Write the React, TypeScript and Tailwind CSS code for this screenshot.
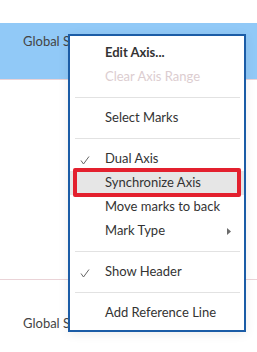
import React from "react";

const Check = () => (
  <svg width="10" height="9" viewBox="0 0 10 9" className="absolute left-[10px] top-[9px]">
    <path d="M1 4.5 L3.5 8 L9 0.5" fill="none" stroke="#666" strokeWidth="1" />
  </svg>
);

function Item({
  label,
  bold,
  disabled,
  checked,
  highlight,
  arrow,
}: {
  label: string;
  bold?: boolean;
  disabled?: boolean;
  checked?: boolean;
  highlight?: boolean;
  arrow?: boolean;
}) {
  return (
    <div
      className={
        "relative h-[24px] flex items-center pl-[35px] text-[13px] " +
        (highlight ? "bg-[#e6e6e6] " : "") +
        (bold ? "font-bold " : "") +
        (disabled ? "text-[#dccdd0]" : "text-[#333333]")
      }
    >
      {checked && <Check />}
      <span>{label}</span>
      {arrow && (
        <svg width="4" height="7" viewBox="0 0 4 7" className="absolute right-[13px] top-[9px]">
          <path d="M0 0 L4 3.5 L0 7 Z" fill="#6b6b6b" />
        </svg>
      )}
    </div>
  );
}

const Sep = () => (
  <div className="h-[17px] flex items-center pl-[5px] pr-[4px]">
    <div className="h-px w-full bg-[#e2e2e2]" />
  </div>
);

export default function App() {
  return (
    <div
      className="relative w-[257px] h-[352px] bg-white overflow-hidden"
      style={{ fontFamily: "Lato, 'Open Sans', sans-serif" }}
    >
      <div className="h-[23px]" />
      <div className="h-[57px] bg-[#91c9f7] border-b border-[#ead3d7] pl-[23px] pt-[9px] text-[13px] text-[#444]">
        Global Sales
      </div>
      <div className="h-[200px] border-b border-[#ead3d7]" />
      <div className="pl-[23px] pt-[34px] text-[13px] text-[#444]">Global Sales</div>

      <div className="absolute left-[68px] top-[34px] w-[178px] h-[298px] bg-white border-2 border-[#1b5ca6] shadow-[0_2px_10px_rgba(0,0,0,0.08)] py-[5px]">
        <Item label="Edit Axis..." bold />
        <Item label="Clear Axis Range" disabled />
        <Sep />
        <Item label="Select Marks" />
        <Sep />
        <Item label="Dual Axis" checked />
        <Item label="Synchronize Axis" highlight />
        <Item label="Move marks to back" />
        <Item label="Mark Type" arrow />
        <Sep />
        <Item label="Show Header" checked />
        <Sep />
        <Item label="Add Reference Line" />
      </div>

      <div className="absolute left-[73px] top-[168px] w-[168px] h-[29px] border-[4px] border-[#e3202e] rounded-[2px]" />
    </div>
  );
}
